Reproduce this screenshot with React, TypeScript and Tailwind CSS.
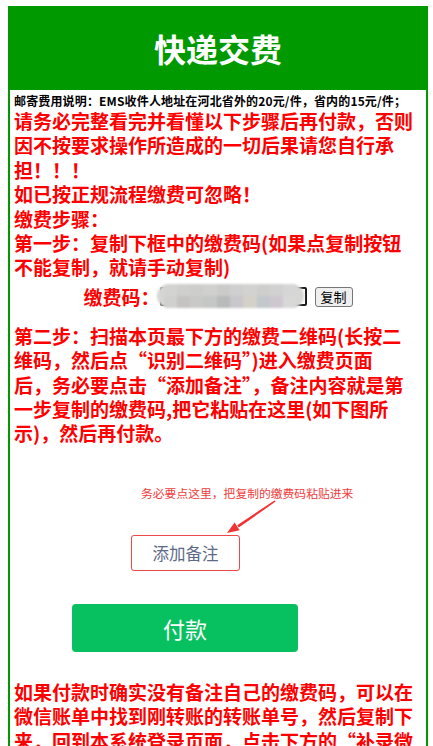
import React from "react";

const topCells = [
  "bg-[#d3d3d1]",
  "bg-[#cfcfcd]",
  "bg-[#cdcecc]",
  "bg-[#d0d0ce]",
  "bg-[#cbcbca]",
  "bg-[#cfcfcf]",
  "bg-[#d2d2d0]",
  "bg-[#cecfcd]",
  "bg-[#d1d1d1]",
  "bg-[#d6d6d6]",
];
const bottomCells = [
  "bg-[#d0d0ce]",
  "bg-[#c6c2c2]",
  "bg-[#c9cac8]",
  "bg-[#c4c7c5]",
  "bg-[#b8bbb9]",
  "bg-[#c9c6cc]",
  "bg-[#d3d1c8]",
  "bg-[#c3c8cc]",
  "bg-[#cfc7cf]",
  "bg-[#d8d8d8]",
];

export default function App() {
  return (
    <div className="min-h-screen bg-white pt-[6px] pl-2 font-['Noto_Sans_CJK_SC',sans-serif]">
      <div className="w-[420px] border-2 border-[#009900] bg-white">
        <div className="flex h-[82px] items-center justify-center bg-[#009900] pb-[2px]">
          <h1 className="text-[32px] font-bold leading-none text-white">快递交费</h1>
        </div>
        <div className="px-1 pt-[2px]">
          <div className="whitespace-nowrap text-[12px] font-bold leading-[17px] tracking-[0.15px] text-black">
            邮寄费用说明：EMS收件人地址在河北省外的20元/件，省内的15元/件；
          </div>
          <div className="text-[19px] font-bold leading-[24.4px] text-[#ff0000]">
            <p>
              请务必完整看完并看懂以下步骤后再付款，否则
              <br />
              因不按要求操作所造成的一切后果请您自行承
              <br />
              担！！！
            </p>
            <p>如已按正规流程缴费可忽略！</p>
            <p>缴费步骤：</p>
            <p>
              第一步：复制下框中的缴费码(如果点复制按钮
              <br />
              不能复制，就请手动复制)
            </p>
            <div className="flex h-[34px] items-center justify-center">
              <span className="whitespace-nowrap">缴费码：</span>
              <div className="relative h-[19px] w-[147px] rounded-[2px] border-2 border-[#1c1c1c] bg-white">
                <div className="absolute -bottom-[4px] -left-[5px] -top-[5px] right-[1px] overflow-hidden rounded-full bg-[#d6d6d4] blur-[1.2px]">
                  <div className="flex h-1/2 px-[7px]">
                    {topCells.map((c, i) => (
                      <div key={i} className={"h-full flex-1 " + c} />
                    ))}
                  </div>
                  <div className="flex h-1/2 px-[7px]">
                    {bottomCells.map((c, i) => (
                      <div key={i} className={"h-full flex-1 " + c} />
                    ))}
                  </div>
                </div>
              </div>
              <button className="ml-[8px] flex h-[20px] w-[38px] items-center justify-center rounded-[3px] border border-[#767676] bg-[#efefef] text-[13px] font-normal leading-none text-black">
                复制
              </button>
            </div>
            <p className="mt-[10px]">
              第二步：扫描本页最下方的缴费二维码(长按二
              <br />
              维码，然后点“识别二维码”)进入缴费页面
              <br />
              后，务必要点击“添加备注”，备注内容就是第
              <br />
              一步复制的缴费码,把它粘贴在这里(如下图所
              <br />
              示)，然后再付款。
            </p>
          </div>

          <div className="ml-[58px] mt-[40px] flex flex-col items-start">
            <div className="ml-[69px] whitespace-nowrap text-[11.8px] leading-[14px] text-[#f03c3c]">
              务必要点这里，把复制的缴费码粘贴进来
            </div>
            <svg className="ml-[150px]" width="60" height="35" viewBox="0 0 60 35">
              <polygon points="53.6,1.6 52.4,0.4 15.2,25.2 16.8,27.6" fill="#f03232" />
              <polygon points="5,33 17.6,30.2 12.6,22.6" fill="#f03232" />
            </svg>
            <div className="ml-[59px] mt-[0px] flex h-[36px] w-[109px] items-center justify-center rounded-[3px] border-[1.5px] border-[#ec4a4a] bg-white shadow-[0_0_1px_rgba(0,0,0,0.15)]">
              <span className="text-[16.5px] leading-none text-[#5c6a87]">添加备注</span>
            </div>
            <div className="mt-[33px] flex h-[48px] w-[226px] items-center justify-center rounded-[4px] bg-[#07c160]">
              <span className="text-[22px] leading-none text-white">付款</span>
            </div>
          </div>

          <p className="mt-[28px] text-[19px] font-bold leading-[24.4px] text-[#ff0000]">
            如果付款时确实没有备注自己的缴费码，可以在
            <br />
            微信账单中找到刚转账的转账单号，然后复制下
            <br />
            来，回到本系统登录页面，点击下方的“补录微
            <br />
            信支付单号”按钮，把单号粘贴进去提交即可。
          </p>
          <div className="h-[40px]" />
        </div>
      </div>
    </div>
  );
}
